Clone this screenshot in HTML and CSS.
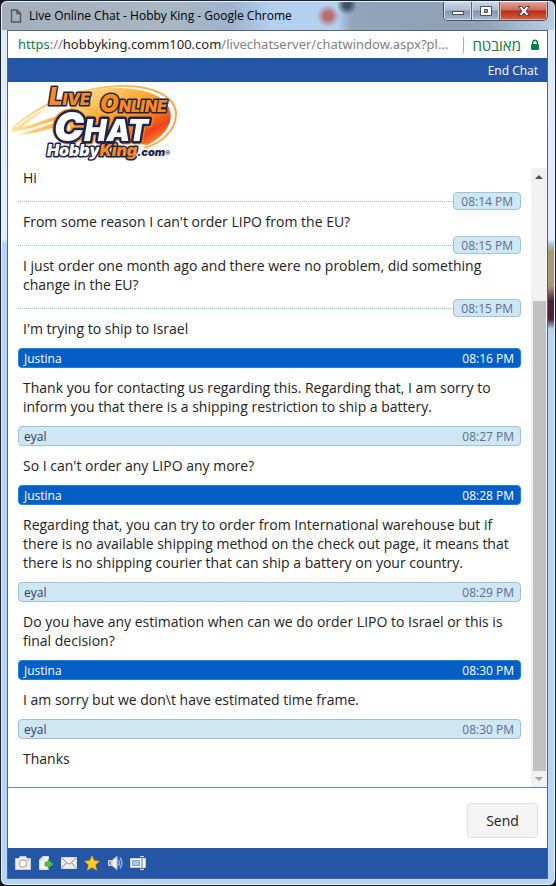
FILE: index.html
```
<!DOCTYPE html>
<html lang="en">
<head>
    <meta charset="utf-8">
    <title>Live Online Chat - Hobby King</title>
    <meta name="viewport" content="width=device-width, initial-scale=1">
    <link rel="stylesheet" href="styles.css">
</head>
<body>

    <div class="window">
        <div class="titlebar">
            <svg class="page-icon" width="12" height="14" viewBox="0 0 12 14">
                <path d="M1.5 1H7l3.500 3.500V13h-9zM7 1v3.500h3.500" fill="none" stroke="#555" stroke-width="1.400"/>
            </svg>
            <span class="title">Live Online Chat - Hobby King - Google Chrome</span>
            <div class="controls">
                <button class="control" aria-label="Minimize">
                    <svg width="14" height="12" viewBox="0 0 14 12"><rect x="1.500" y="6.500" width="11" height="3" fill="#fff" stroke="#49505c"/></svg>
                </button>
                <button class="control" aria-label="Maximize">
                    <svg width="14" height="12" viewBox="0 0 14 12"><path d="M1.500 1.500h11v9h-11zM5.500 4.500v3h3v-3z" fill="#fff" fill-rule="evenodd" stroke="#49505c"/></svg>
                </button>
                <button class="control close" aria-label="Close">
                    <svg width="14" height="12" viewBox="0 0 14 12"><path d="M1.500 1.500h3.200L7 4l2.300-2.500h3.200L9 6l3.500 4.500H9.300L7 8l-2.300 2.500H1.500L5 6z" fill="#fff" stroke="#5b3a3e"/></svg>
                </button>
            </div>
        </div>

        <div class="page">
            <div class="address">
                <span class="url"><span class="scheme">https</span>://<span class="host">hobbyking.comm100.com</span>/livechatserver/chatwindow.aspx?pl...</span>
                <span class="secure" lang="he">מאובטח</span>
                <svg class="lock" width="10" height="12" viewBox="0 0 10 12">
                    <rect x="1" y="5" width="8" height="6" rx="1" fill="#0b8043"/>
                    <path d="M2.700 5.500V3.500a2.300 2.300 0 0 1 4.600 0v2" fill="none" stroke="#0b8043" stroke-width="1.400"/>
                </svg>
            </div>

            <div class="topbar"><a class="end-chat" href="#">End Chat</a></div>

            <div class="banner">
                <svg class="logo" width="180" height="84" viewBox="0 0 180 84" role="img" aria-label="Live Online Chat HobbyKing.com">
                    <defs>
                        <linearGradient id="flame" x1="0" x2="1" y1="0" y2="1">
                            <stop offset="0" stop-color="#ffe9a0"/>
                            <stop offset=".35" stop-color="#ffb548"/>
                            <stop offset=".6" stop-color="#ff8a1e"/>
                            <stop offset=".78" stop-color="#f0421a"/>
                            <stop offset="1" stop-color="#ffc12e"/>
                        </linearGradient>
                        <linearGradient id="trail" x1="0" x2="1">
                            <stop offset="0" stop-color="#ffe39a"/>
                            <stop offset="1" stop-color="#f9a648"/>
                        </linearGradient>
                    </defs>
                    <path d="M3 46C32 20 72 5 110 4c37-1 56 13 56 28 0 16-14 29-32 34" fill="none" stroke="url(#trail)" stroke-width="2"/>
                    <path d="M60 12C84 5 122 3 143 12c27 11 22 38-6 51L60 50z" fill="url(#flame)"/>
                    <path d="M2 46C20 30 38 20 56 14 38 24 24 34 14 45l36-12-1 4-28 9-19 4zM8 53l42-14v5L24 51z" fill="url(#trail)"/>
                    <path d="M6 45C22 32 37 24 52 17 36 27 22 36 13 45M12 50l36-11" fill="none" stroke="#fff4d5" stroke-width="2"/>
                    <g class="logo-line">
                        <text x="39" y="23"><tspan class="cap">L</tspan>IVE</text>
                        <text x="90" y="30"><tspan class="cap">O</tspan>NLINE</text>
                    </g>
                    <text class="logo-chat" x="44" y="59"><tspan class="cap">C</tspan>HAT</text>
                    <text class="logo-name" x="37" y="74">Hobby<tspan class="king">King</tspan><tspan class="com">.com</tspan><tspan class="reg">®</tspan></text>
                </svg>
            </div>

            <div class="chat">
                <div class="messages">
                    <p class="text">Hi</p>
                    <div class="divider"><time>08:14 PM</time></div>
                    <p class="text">From some reason I can't order LIPO from the EU?</p>
                    <div class="divider"><time>08:15 PM</time></div>
                    <p class="text">I just order one month ago and there were no problem, did something change in the EU?</p>
                    <div class="divider"><time>08:15 PM</time></div>
                    <p class="text">I'm trying to ship to Israel</p>

                    <div class="sender agent"><span>Justina</span><time>08:16 PM</time></div>
                    <p class="text">Thank you for contacting us regarding this. Regarding that, I am sorry to inform you that there is a shipping restriction to ship a battery.</p>

                    <div class="sender"><span>eyal</span><time>08:27 PM</time></div>
                    <p class="text">So I can't order any LIPO any more?</p>

                    <div class="sender agent"><span>Justina</span><time>08:28 PM</time></div>
                    <p class="text">Regarding that, you can try to order from International warehouse but if there is no available shipping method on the check out page, it means that there is no shipping courier that can ship a battery on your country.</p>

                    <div class="sender"><span>eyal</span><time>08:29 PM</time></div>
                    <p class="text">Do you have any estimation when can we do order LIPO to Israel or this is final decision?</p>

                    <div class="sender agent"><span>Justina</span><time>08:30 PM</time></div>
                    <p class="text">I am sorry but we don\t have estimated time frame.</p>

                    <div class="sender"><span>eyal</span><time>08:30 PM</time></div>
                    <p class="text">Thanks</p>
                </div>
                <div class="scrollbar">
                    <svg class="arrow" width="16" height="16" viewBox="0 0 16 16"><path d="M4 11h8L8 7z" fill="#505050"/></svg>
                    <div class="track"><div class="thumb"></div></div>
                    <svg class="arrow" width="16" height="16" viewBox="0 0 16 16"><path d="M4 6h8l-4 4z" fill="#a3a3a3"/></svg>
                </div>
            </div>

            <form class="compose">
                <textarea class="message-box" aria-label="Message"></textarea>
                <button class="send" type="button">Send</button>
            </form>

            <div class="toolbar">
                <button class="tool" aria-label="Screenshot">
                    <svg width="16" height="16" viewBox="0 0 16 16">
                        <path d="M.500 3.500h3.500l1-2h6l1 2h3.500v11H.500z" fill="#eee" stroke="#ccc"/>
                        <circle cx="8" cy="8.500" r="3.700" fill="#fff" stroke="#999"/>
                        <path d="M12.500 5h1.500" stroke="#888"/>
                    </svg>
                </button>
                <button class="tool" aria-label="Send file">
                    <svg width="16" height="16" viewBox="0 0 16 16">
                        <path d="M5 1.500h5.500v13H1.500V5z" fill="#f2f2f2" stroke="#ddd"/>
                        <path d="M1.500 5H5V1.500" fill="#fff" stroke="#ccc"/>
                        <path d="M7 7h3V4.500l5.500 4.500-5.500 4.500V11H7z" fill="#4fbe45" stroke="#2f9a35" stroke-width=".600"/>
                    </svg>
                </button>
                <button class="tool" aria-label="Email transcript">
                    <svg width="16" height="16" viewBox="0 0 16 16">
                        <path d="M.500 2.500h15v11H.500z" fill="#eee" stroke="#ddd"/>
                        <path d="M1 3l5.500 5.500q1.500 1 3 0L15 3M1 13l4.500-5.500M15 13l-4.500-5.500" fill="none" stroke="#888"/>
                    </svg>
                </button>
                <button class="tool" aria-label="Rate">
                    <svg width="16" height="16" viewBox="0 0 16 16">
                        <path d="M8 1l2.100 4.800 5.200.500-3.900 3.500 1.100 5.200L8 12.300 3.500 15l1.100-5.200L.700 6.300l5.200-.500z" fill="#ffcf1b" stroke="#eda61c" stroke-width=".800"/>
                    </svg>
                </button>
                <button class="tool" aria-label="Sound">
                    <svg width="16" height="16" viewBox="0 0 16 16">
                        <path d="M1.500 5.500h3v5h-3z" fill="#999" stroke="#ddd"/>
                        <path d="M5 5.500L10 1.500v13L5 10.500z" fill="#f0f0f0" stroke="#ccc"/>
                        <path d="M11.500 5q1.500 3 0 6M13 2.500q3.500 5.500 0 11" fill="none" stroke="#79b7f0" stroke-width="1.600"/>
                    </svg>
                </button>
                <button class="tool" aria-label="Text field">
                    <svg width="16" height="16" viewBox="0 0 16 16">
                        <path d="M.500 3.500h15v9H.500z" fill="#fff" stroke="#ccc"/>
                        <path d="M2.500 5.500h7v5h-7z" fill="#9dc8ef" stroke="#7fa3c8"/>
                        <path d="M10 2.500h4M10 13.500h4M12 2.500v11" fill="none" stroke="#fff" stroke-width="2.400"/>
                        <path d="M10 2.500h4M12 2.500v11M10 13.500h4" fill="none" stroke="#666"/>
                    </svg>
                </button>
            </div>
        </div>
    </div>

</body>
</html>
```

FILE: styles.css
```
* {
    box-sizing: border-box;
}

body {
    margin: 0;
    background-color: #15171d;
    font-family: "Open Sans", "Noto Sans", sans-serif;
    font-size: 14px;
    line-height: 19px;
    color: #222;
}

button {
    padding: 0;
    border: none;
    background: none;
    font-family: inherit;
    cursor: pointer;
}

svg {
    display: block;
}

.window {
    display: flex;
    flex-direction: column;
    min-height: 100vh;
    padding: 0 7px 6px 6px;
    border: 1px solid #1b2230;
    border-radius: 7px;
    background:
        linear-gradient(transparent 240px, #a99a72 250px, #a99a72 285px, #4b2230 300px, #4b2230 318px, transparent 328px) right / 7px 100% no-repeat,
        linear-gradient(#dfeaf7, #e2eefb 238px, #b7d5f6 242px, #b7d5f6);
    box-shadow: inset 0 0 0 1px #e6f2ff;
}

.titlebar {
    display: flex;
    align-items: center;
    height: 28px;
    margin: 1px -6px 0 -5px;
    padding-left: 8px;
    border-radius: 5px 5px 0 0;
    background:
        radial-gradient(circle at 326px 14px, #b96f72 4px, transparent 11px),
        radial-gradient(circle at 345px 3px, #3e5065 3px, transparent 10px),
        linear-gradient(90deg, #a4afbc, #a9b6c4 170px, #9db3cd 230px, #b3d0ef 270px, #b3d0ef 335px, #91a4b9 350px, #8fa2b6 480px, #b8cee5);
}

.title {
    flex: 1;
    margin-left: 7px;
    font-size: 12px;
    line-height: 16px;
    color: #000;
    white-space: nowrap;
}

.controls {
    display: flex;
    align-self: flex-start;
    margin-right: 6px;
    border: 1px solid #455263;
    border-top: none;
    border-radius: 0 0 5px 5px;
    overflow: hidden;
}

.control {
    display: flex;
    justify-content: center;
    align-items: center;
    width: 28px;
    height: 18px;
    border-right: 1px solid #566579;
    background: linear-gradient(#c8d4e2, #afbdcd 8px, #8495aa 9px, #a8bacd);
    box-shadow: inset 0 0 0 1px #d0dceb;
}

.close {
    width: 47px;
    border-right: none;
    background: linear-gradient(#dda293, #cd6b58 8px, #b52a14 9px, #d66544);
    box-shadow: inset 0 0 0 1px #e3a99b;
}

.page {
    flex: 1;
    display: flex;
    flex-direction: column;
    border: 1px solid #53657e;
    background-color: #fff;
}

.address {
    display: flex;
    align-items: center;
    height: 27px;
    padding: 0 7px 0 10px;
    color: #808080;
}

.url {
    flex: 1;
    font-family: "Noto Sans", sans-serif;
    font-size: 13px;
    white-space: nowrap;
}

.scheme,
.secure {
    color: #0b8043;
}

.host {
    color: #222;
}

.secure {
    padding-left: 8px;
    border-left: 1px solid #aaa;
    font-size: 15px;
    line-height: 16px;
}

.lock {
    margin-left: 9px;
}

.topbar {
    height: 24px;
    padding-right: 9px;
    background-color: #2555a5;
    line-height: 24px;
    text-align: right;
}

.end-chat {
    color: #fff;
    font-size: 12px;
    text-decoration: none;
}

.banner {
    height: 86px;
    padding-left: 2px;
}

.logo text {
    font-family: "Inter", sans-serif;
    font-weight: 900;
    font-style: italic;
    paint-order: stroke;
    stroke: #1d2450;
    stroke-width: 3px;
    stroke-linejoin: round;
}

.logo-line {
    font-size: 16px;
    fill: #f68b1f;
}

.logo-line .cap {
    font-size: 24px;
}

.logo .logo-chat {
    font-size: 30px;
    fill: #fff;
    stroke-width: 5px;
    filter: drop-shadow(1px 1px #f68b1f) drop-shadow(-1px -1px #f68b1f);
}

.logo-chat .cap {
    font-size: 40px;
}

.logo-name {
    font-size: 16px;
    fill: #fff;
}

.logo-name .king {
    fill: #f68b1f;
}

.logo-name .com {
    font-size: 11px;
    fill: #1d2450;
    stroke: #fff;
}

.logo-name .reg {
    font-size: 7px;
    fill: #1d2450;
    stroke: none;
}

.chat {
    flex: 1;
    display: flex;
}

.messages {
    flex: 1;
    padding: 0 10px;
}

.text {
    margin: 0;
    padding: 0 5px;
}

.divider {
    display: flex;
    align-items: center;
    margin: 5px 0 2px;
}

.divider::before {
    content: "";
    flex: 1;
    border-top: 1px dotted #9dbbcb;
}

.divider time {
    height: 18px;
    padding: 0 7px;
    border: 1px solid #9fc3d8;
    border-radius: 4px;
    background-color: #cfe6f3;
    color: #5c6f92;
    font-size: 12px;
    line-height: 17px;
}

.sender {
    display: flex;
    justify-content: space-between;
    height: 20px;
    margin: 10px 0;
    padding: 0 6px 0 5px;
    border: 1px solid #9cbfda;
    border-radius: 4px;
    background-color: #cfe6f3;
    color: #2c3d66;
    font-size: 12px;
    line-height: 19px;
}

.sender time {
    color: #5c6f92;
}

.agent,
.agent time {
    color: #fff;
    font-weight: 500;
}

.agent {
    border-color: #1587d4;
    background-color: #055ec6;
}

.scrollbar {
    display: flex;
    flex-direction: column;
    width: 16px;
    background-color: #f1f1f1;
}

.track {
    flex: 1;
    display: flex;
    flex-direction: column;
    justify-content: flex-end;
    padding: 0 1px 0 2px;
}

.thumb {
    height: 80%;
    background-color: #c1c1c1;
}

.compose {
    display: flex;
    align-items: center;
    gap: 10px;
    height: 61px;
    padding: 0 9px;
    border-top: 1px solid #5f8fb4;
}

.message-box {
    flex: 1;
    height: 40px;
    border: none;
    outline: none;
    resize: none;
    font: inherit;
}

.send {
    width: 71px;
    height: 35px;
    margin-top: 4px;
    border: 1px solid #ddd;
    border-radius: 4px;
    background-color: #f5f5f5;
    color: #222;
    font-size: 14px;
}

.toolbar {
    display: flex;
    align-items: center;
    gap: 7px;
    height: 30px;
    padding-left: 7px;
    background-color: #2555a5;
}
```
